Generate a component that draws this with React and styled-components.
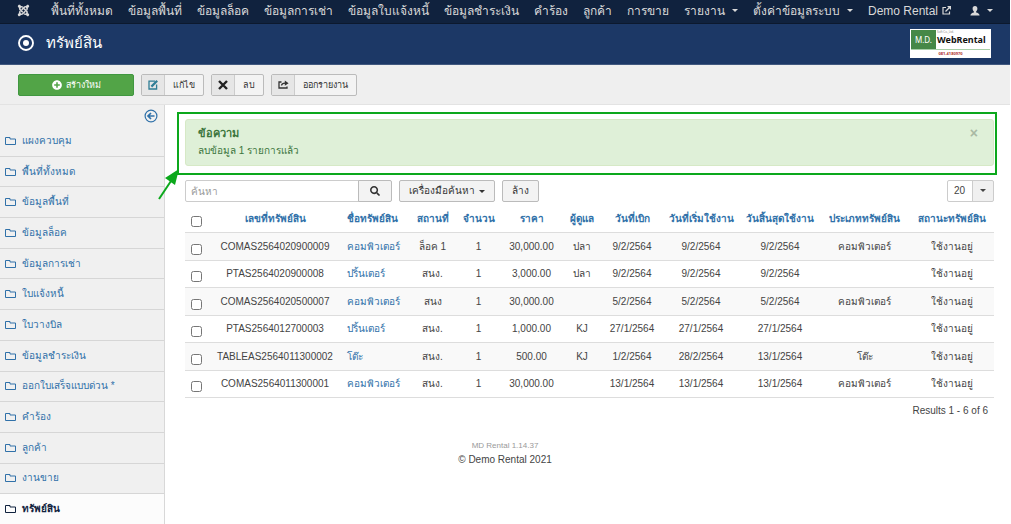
import styled, { createGlobalStyle } from 'styled-components';
import { FaJoomla, FaSearch, FaPlusCircle } from 'react-icons/fa';

const sans = `'Liberation Sans', 'Noto Sans', sans-serif`;

const GlobalStyle = createGlobalStyle`
  * { box-sizing: border-box; }
  body {
    margin: 0;
    background: #fff;
    color: #444;
    font: 10px/16px ${sans};
  }
  a { color: #3071a9; text-decoration: none; }
  button, input, select { font: inherit; color: inherit; margin: 0; }
  button { cursor: pointer; }
`;

const Page = styled.div`
  min-height: 100vh;
  display: flex;
  flex-direction: column;
  margin-right: 1px;
`;

const NavBar = styled.nav`
  height: 24px;
  display: flex;
  align-items: center;
  gap: 15px;
  padding: 0 16px 2px 17px;
  background: #10223e;
  border-bottom: 1px solid #0c192e;
  font-size: 12px;
  line-height: 20px;
  white-space: nowrap;
`;

const NavLink = styled.a`
  display: flex;
  align-items: center;
  gap: ${(p) => (p.$gap ? '7px' : '4px')};
  color: #d9d9d9;
  &:first-child { margin-right: 6px; }
  &:last-child { margin-left: 4px; }
`;

const Caret = styled.span`
  border: 3px solid transparent;
  border-top-color: currentColor;
  border-bottom: 0;
`;

const Header = styled.header`
  height: 41px;
  display: flex;
  align-items: center;
  padding: 0 19px 2px 18px;
  background: #1c3866;
  border-bottom: 1px solid #41587f;
  color: #fff;
`;

const Title = styled.h1`
  flex: 1;
  margin: 0 0 0 12px;
  font-size: 15px;
  line-height: 24px;
  font-weight: 400;
`;

const Logo = styled.div`
  width: 81px;
  background: #fff;
  padding: 1px;
  font-family: 'Noto Sans', 'Open Sans', sans-serif;
`;

const LogoTop = styled.div`
  display: flex;
  height: 20px;
  border-bottom: 1px solid #a8cfa8;
`;

const LogoMark = styled.div`
  width: 25px;
  background: #468847;
  text-align: center;
  font-size: 8px;
  line-height: 19px;
`;

const LogoName = styled.div`
  flex: 1;
  padding-left: 1px;
  color: #111;
  font-size: 9px;
  line-height: 12px;
  font-weight: 700;
  small {
    display: block;
    height: 4px;
    font-size: 3px;
    line-height: 4px;
    font-weight: 400;
    color: #888;
  }
`;

const LogoPhone = styled.div`
  height: 7px;
  color: #b03030;
  text-align: center;
  font-size: 4px;
  line-height: 7px;
  font-weight: 700;
`;

const Toolbar = styled.div`
  height: 40px;
  display: flex;
  align-items: center;
  gap: 7px;
  padding: 0 18px;
  background: #efefef;
  border-bottom: 1px solid #e3e3e3;
  font-size: 9px;
`;

const NewButton = styled.button`
  width: 116px;
  height: 22px;
  display: flex;
  align-items: center;
  justify-content: center;
  gap: 4px;
  padding: 0;
  border: 1px solid #409740;
  border-radius: 2px;
  background: #52a447;
  color: #fff;
`;

const ToolButton = styled.button`
  height: 22px;
  display: flex;
  align-items: center;
  padding: 0 8px 0 0;
  border: 1px solid #bbb;
  border-radius: 2px;
  background: #f3f3f3;
  color: #333;
  span {
    width: 23px;
    height: 20px;
    display: grid;
    place-items: center;
    margin-right: 8px;
    border-right: 1px solid #ccc;
    background: #e6e6e6;
  }
`;

const Body = styled.div`
  flex: 1;
  display: flex;
`;

const Sidebar = styled.aside`
  width: 165px;
  flex: none;
  display: flex;
  flex-direction: column;
  background: #f0f0f0;
  border-right: 1px solid #d8d8d8;
`;

const Collapse = styled.button`
  align-self: flex-end;
  height: 21px;
  display: flex;
  align-items: center;
  padding: 0 6px;
  border: 0;
  background: none;
  color: #3071a9;
`;

const Menu = styled.ul`
  flex: 1;
  display: flex;
  flex-direction: column;
  margin: 0;
  padding: 0;
  list-style: none;
`;

const MenuItem = styled.li`
  flex: 1;
  display: flex;
  border-bottom: 1px solid #d6d6d6;
  &:last-child { border-bottom: 0; }
`;

const MenuLink = styled.a`
  flex: 1;
  display: flex;
  align-items: center;
  gap: 6px;
  padding-left: 5px;
  background: ${(p) => (p.$active ? '#fcfcfc' : 'none')};
  color: ${(p) => (p.$active ? '#10223e' : '#3071a9')};
  font-weight: ${(p) => (p.$active ? 700 : 400)};
`;

const Main = styled.main`
  flex: 1;
  min-width: 0;
  padding: 7px 16px 0 20px;
`;

const Callout = styled.div`
  position: relative;
  margin: 0 -3px 5px -8px;
  padding: 5px 1px 7px 6px;
  border: 2px solid #0ca81c;
`;

const Arrow = styled.svg`
  position: absolute;
  left: -22px;
  top: 54px;
`;

const Alert = styled.div`
  display: flex;
  justify-content: space-between;
  align-items: flex-start;
  padding: 4px 15px 5px 12px;
  border: 1px solid #d6e9c6;
  border-radius: 3px;
  background: #dff0d8;
  color: #3c763d;
  h4, p { margin: 0; line-height: 18px; }
  h4 { font-size: 11px; }
`;

const CloseButton = styled.button`
  padding: 0;
  border: 0;
  background: none;
  color: #a9b9a4;
  font-size: 14px;
  line-height: 18px;
  font-weight: 700;
`;

const FilterBar = styled.form`
  display: flex;
  gap: 7px;
`;

const SearchGroup = styled.div`
  display: flex;
`;

const SearchInput = styled.input`
  width: 174px;
  height: 22px;
  padding: 0 5px;
  border: 1px solid #ccc;
  border-radius: 2px 0 0 2px;
  &::placeholder { color: #999; opacity: 1; }
`;

const Button = styled.button`
  height: 22px;
  display: flex;
  align-items: center;
  justify-content: center;
  gap: 4px;
  padding: 0 9px;
  border: 1px solid #bbb;
  border-radius: 2px;
  background: #f3f3f3;
  color: #333;
`;

const SearchButton = styled(Button)`
  width: 34px;
  margin-left: -1px;
  border-radius: 0 2px 2px 0;
`;

const LimitBox = styled.div`
  position: relative;
  margin-left: auto;
`;

const Limit = styled.select`
  appearance: none;
  width: 47px;
  height: 22px;
  padding: 0 6px;
  border: 1px solid #ccc;
  border-radius: 2px;
  background: linear-gradient(to right, #fff 24px, #ccc 24px, #ccc 25px, #f0f0f0 25px);
`;

const LimitCaret = styled(Caret)`
  position: absolute;
  right: 8px;
  top: 9px;
  pointer-events: none;
`;

const Table = styled.table`
  width: 100%;
  margin-top: 3px;
  table-layout: fixed;
  border-collapse: separate;
  border-spacing: 0;
  white-space: nowrap;
  th, td {
    padding: 0 6px;
    border-bottom: 1px solid #ddd;
    text-align: center;
  }
  th { height: 28px; }
  td { height: 27px; }
  tbody tr:nth-child(odd) td { height: 28px; background: #f9f9f9; }
  th:nth-child(3), td:nth-child(3) { text-align: left; }
`;

const Check = styled.input`
  display: block;
  width: 11px;
  height: 11px;
  && { margin-top: 5px; }
`;

const Results = styled.p`
  margin: 5px 6px 0;
  text-align: right;
`;

const Footer = styled.footer`
  margin: 20px -16px 0 -185px;
  line-height: 14px;
  text-align: center;
  small {
    display: block;
    font-size: 8px;
    color: #999;
  }
`;

const menu = [
  'แผงควบคุม', 'พื้นที่ทั้งหมด', 'ข้อมูลพื้นที่', 'ข้อมูลล็อค', 'ข้อมูลการเช่า', 'ใบแจ้งหนี้', 'ใบวางบิล',
  'ข้อมูลชำระเงิน', 'ออกใบเสร็จแบบด่วน *', 'คำร้อง', 'ลูกค้า', 'งานขาย', 'ทรัพย์สิน',
];

const nav = [
  'พื้นที่ทั้งหมด', 'ข้อมูลพื้นที่', 'ข้อมูลล็อค', 'ข้อมูลการเช่า', 'ข้อมูลใบแจ้งหนี้', 'ข้อมูลชำระเงิน',
  'คำร้อง', 'ลูกค้า', 'การขาย',
];

const columns = [
  ['เลขที่ทรัพย์สิน', 132], ['ชื่อทรัพย์สิน', 68], ['สถานที่', 47], ['จำนวน', 45], ['ราคา', 61], ['ผู้ดูแล', 40],
  ['วันที่เบิก', 60], ['วันที่เริ่มใช้งาน', 78], ['วันสิ้นสุดใช้งาน', 80], ['ประเภททรัพย์สิน', 89], ['สถานะทรัพย์สิน', 85],
];

const assets = [
  ['COMAS2564020900009', 'คอมพิวเตอร์', 'ล็อค 1', '1', '30,000.00', 'ปลา', '9/2/2564', '9/2/2564', '9/2/2564', 'คอมพิวเตอร์', 'ใช้งานอยู่'],
  ['PTAS2564020900008', 'ปริ้นเตอร์', 'สนง.', '1', '3,000.00', 'ปลา', '9/2/2564', '9/2/2564', '9/2/2564', '', 'ใช้งานอยู่'],
  ['COMAS2564020500007', 'คอมพิวเตอร์', 'สนง', '1', '30,000.00', '', '5/2/2564', '5/2/2564', '5/2/2564', 'คอมพิวเตอร์', 'ใช้งานอยู่'],
  ['PTAS2564012700003', 'ปริ้นเตอร์', 'สนง.', '1', '1,000.00', 'KJ', '27/1/2564', '27/1/2564', '27/1/2564', '', 'ใช้งานอยู่'],
  ['TABLEAS2564011300002', 'โต๊ะ', 'สนง.', '1', '500.00', 'KJ', '1/2/2564', '28/2/2564', '13/1/2564', 'โต๊ะ', 'ใช้งานอยู่'],
  ['COMAS2564011300001', 'คอมพิวเตอร์', 'สนง.', '1', '30,000.00', '', '13/1/2564', '13/1/2564', '13/1/2564', 'คอมพิวเตอร์', 'ใช้งานอยู่'],
];

const FolderIcon = () => (
  <svg width="11" height="10" viewBox="0 0 11 10" fill="none" stroke="currentColor">
    <path d="M.5 8.500V1.500h4.500v1.500h5.500v5.500z" />
  </svg>
);

const TargetIcon = () => (
  <svg width="16" height="16" viewBox="0 0 16 16">
    <circle cx="8" cy="8" r="7" fill="none" stroke="currentColor" strokeWidth="1.900" />
    <circle cx="8" cy="8" r="3" fill="currentColor" />
  </svg>
);

const UserIcon = () => (
  <svg width="10" height="10" viewBox="0 0 10 10" fill="currentColor">
    <path d="M5 0c1.600 0 2.400 1.100 2.400 2.600C7.400 4 6.800 5 6.100 5.600v1c1.800.4 3.300 1 3.500 2.900H.4c.2-1.900 1.700-2.500 3.500-2.900v-1C3.200 5 2.600 4 2.600 2.600 2.600 1.100 3.400 0 5 0z" />
  </svg>
);

const OpenIcon = () => (
  <svg width="9" height="9" viewBox="0 0 9 9" fill="none" stroke="currentColor">
    <path d="M4 1.500H1v6.500h6.500V5.500" strokeWidth="1.200" />
    <path d="M3.500 5.500 7.500 1.500" strokeWidth="1.300" />
    <path d="M5 0h4v4z" fill="currentColor" stroke="none" />
  </svg>
);

const EditIcon = () => (
  <svg width="10" height="10" viewBox="0 0 10 10" fill="none" stroke="#2f7d95" strokeWidth="1.300">
    <path d="M7 1.200H1v7.800h7.600V4.500" />
    <path d="M3.400 6.600 9.200.8" strokeWidth="2.200" />
  </svg>
);

const RemoveIcon = () => (
  <svg width="10" height="10" viewBox="0 0 10 10" stroke="#222" strokeWidth="2.400">
    <path d="M1 1l8 8M9 1 1 9" />
  </svg>
);

const ExportIcon = () => (
  <svg width="11" height="10" viewBox="0 0 11 10" fill="none" stroke="#333" strokeWidth="1.300">
    <path d="M3.500 2H1v6h8V6.500" />
    <path d="M3.500 5.500c.3-1.700 1.500-2.300 3.500-2.300" />
    <path d="M6.800.6 10.600 3.200 6.800 5.800z" fill="#333" stroke="none" />
  </svg>
);

const BackIcon = () => (
  <svg width="14" height="14" viewBox="0 0 14 14" fill="none" stroke="currentColor">
    <circle cx="7" cy="7" r="5.900" strokeWidth="1.200" />
    <path d="M10.500 7H4.500M7 4 4 7l3 3" strokeWidth="1.700" />
  </svg>
);

const App = () => (
  <Page>
    <GlobalStyle />
    <NavBar>
      <NavLink href="#" aria-label="Joomla"><FaJoomla size={13} /></NavLink>
      {nav.map((item) => <NavLink href="#" key={item}>{item}</NavLink>)}
      <NavLink href="#" $gap>รายงาน<Caret /></NavLink>
      <NavLink href="#" $gap>ตั้งค่าข้อมูลระบบ<Caret /></NavLink>
      <NavLink href="#">Demo Rental<OpenIcon /></NavLink>
      <NavLink href="#" $gap aria-label="User"><UserIcon /><Caret /></NavLink>
    </NavBar>
    <Header>
      <TargetIcon />
      <Title>ทรัพย์สิน</Title>
      <Logo>
        <LogoTop>
          <LogoMark>M.D.</LogoMark>
          <LogoName><small>Soft Co.,Ltd.</small>WebRental</LogoName>
        </LogoTop>
        <LogoPhone>081-4180970</LogoPhone>
      </Logo>
    </Header>
    <Toolbar>
      <NewButton><FaPlusCircle size={10} />สร้างใหม่</NewButton>
      <ToolButton><span><EditIcon /></span>แก้ไข</ToolButton>
      <ToolButton><span><RemoveIcon /></span>ลบ</ToolButton>
      <ToolButton><span><ExportIcon /></span>ออกรายงาน</ToolButton>
    </Toolbar>
    <Body>
      <Sidebar>
        <Collapse aria-label="Collapse"><BackIcon /></Collapse>
        <Menu>
          {menu.map((item) => (
            <MenuItem key={item}>
              <MenuLink href="#" $active={item === 'ทรัพย์สิน'}><FolderIcon />{item}</MenuLink>
            </MenuItem>
          ))}
        </Menu>
      </Sidebar>
      <Main>
        <Callout>
          <Alert>
            <div>
              <h4>ข้อความ</h4>
              <p>ลบข้อมูล 1 รายการแล้ว</p>
            </div>
            <CloseButton aria-label="Close">×</CloseButton>
          </Alert>
          <Arrow width="26" height="34" viewBox="0 0 26 34">
            <path d="M2 31 14 13" stroke="#0ca81c" strokeWidth="2" />
            <path d="M22 1 8 10l10 7z" fill="#0ca81c" />
          </Arrow>
        </Callout>
        <FilterBar>
          <SearchGroup>
            <SearchInput placeholder="ค้นหา" aria-label="ค้นหา" />
            <SearchButton type="button" aria-label="Search"><FaSearch size={10} /></SearchButton>
          </SearchGroup>
          <Button type="button">เครื่องมือค้นหา<Caret /></Button>
          <Button type="button">ล้าง</Button>
          <LimitBox>
            <Limit aria-label="Limit" defaultValue="20"><option>20</option><option>50</option></Limit>
            <LimitCaret />
          </LimitBox>
        </FilterBar>
        <Table>
          <colgroup>
            <col width="24" />
            {columns.map(([name, width]) => <col key={name} width={width} />)}
          </colgroup>
          <thead>
            <tr>
              <th><Check type="checkbox" aria-label="Check all" /></th>
              {columns.map(([name]) => <th key={name}><a href="#">{name}</a></th>)}
            </tr>
          </thead>
          <tbody>
            {assets.map((row) => (
              <tr key={row[0]}>
                <td><Check type="checkbox" aria-label={row[0]} /></td>
                {row.map((cell, i) => <td key={i}>{i === 1 ? <a href="#">{cell}</a> : cell}</td>)}
              </tr>
            ))}
          </tbody>
        </Table>
        <Results>Results 1 - 6 of 6</Results>
        <Footer>
          <small>MD Rental 1.14.37</small>
          © Demo Rental 2021
        </Footer>
      </Main>
    </Body>
  </Page>
);

export default App;
